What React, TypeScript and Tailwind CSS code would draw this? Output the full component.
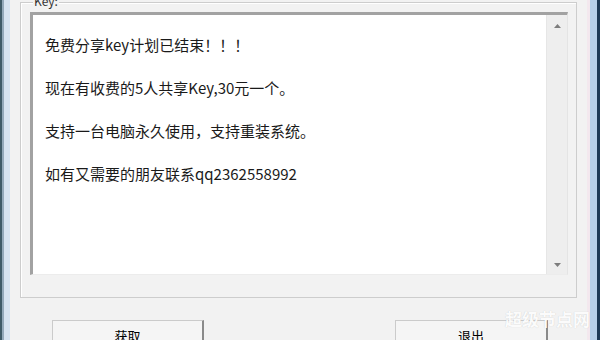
import React from "react";

const lines = [
  "免费分享key计划已结束！！！",
  "现在有收费的5人共享Key,30元一个。",
  "支持一台电脑永久使用，支持重装系统。",
  "如有又需要的朋友联系qq2362558992",
];

export default function App() {
  return (
    <div className="relative flex w-[600px] h-[340px] overflow-hidden bg-[#f0f0f0] font-['Noto_Sans_CJK_SC',sans-serif] text-[#1a1a1a]">
      {/* left window frame */}
      <div className="w-[2px] bg-[#3f5b69]" />
      <div className="w-[2px] bg-[#93a9bb]" />
      <div className="w-[6px] bg-[#d6e3f1]" />

      {/* main client area */}
      <div className="flex-1 flex flex-col bg-[#f2f2f2]">
        <div className="pl-[10px] pr-[10px] pt-[2px]">
          <div className="relative h-[296px] border border-[#cdcdcd] shadow-[inset_1px_1px_0_#ffffff] flex flex-col">
            <div className="absolute left-[12px] top-[-8px] px-[1px] bg-[#f2f2f2] text-[12px] leading-[12px] text-[#333]">
              Key:
            </div>
            <div className="mt-[9px] ml-[9px] mr-[8px] h-[263px] flex bg-white border-t-[3px] border-l-[3px] border-t-[#a2a2a2] border-l-[#a2a2a2] border-r border-r-[#e4e4e4] border-b border-b-[#ececec]">
              <div className="flex-1 pt-[19px] pl-[12px] flex flex-col gap-[21px] text-[15px] leading-[22px]">
                {lines.map((l) => (
                  <div key={l}>{l}</div>
                ))}
              </div>
              <div className="w-[21px] bg-[#eeeeee] border-l border-[#e6e6e6] flex flex-col items-center justify-between pt-[9px] pb-[7px]">
                <svg width="7" height="4" viewBox="0 0 7 4">
                  <path d="M0 4 L3.5 0 L7 4 Z" fill="#7d7d7d" />
                </svg>
                <svg width="7" height="4" viewBox="0 0 7 4">
                  <path d="M0 0 L3.5 4 L7 0 Z" fill="#7d7d7d" />
                </svg>
              </div>
            </div>
          </div>
        </div>

        {/* buttons */}
        <div className="mt-[22px] flex pl-[42px]">
          <div className="w-[152px] h-[30px] border border-[#cbcbcb] border-r-2 border-r-[#8a8a8a] bg-[#f5f5f5] flex justify-center pt-[8px] text-[13px] leading-[14px] text-black">
            获取
          </div>
          <div className="ml-[191px] w-[153px] h-[30px] border border-[#cbcbcb] border-r-2 border-r-[#8a8a8a] bg-[#f5f5f5] flex justify-center pt-[8px] text-[13px] leading-[14px] text-black">
            退出
          </div>
        </div>
      </div>

      {/* right window frame */}
      <div className="w-[3px] bg-[#f3e8ee]" />
      <div className="w-[7px] bg-[#b6d1eb]" />
      <div className="w-[3px] bg-[#1d3b58]" />

      {/* watermark */}
      <div className="absolute left-[505px] top-[309px] text-[17px] leading-[20px] font-bold text-white/95 [text-shadow:0_0_1px_rgba(0,0,0,0.18)]">
        超级节点网
      </div>
    </div>
  );
}
